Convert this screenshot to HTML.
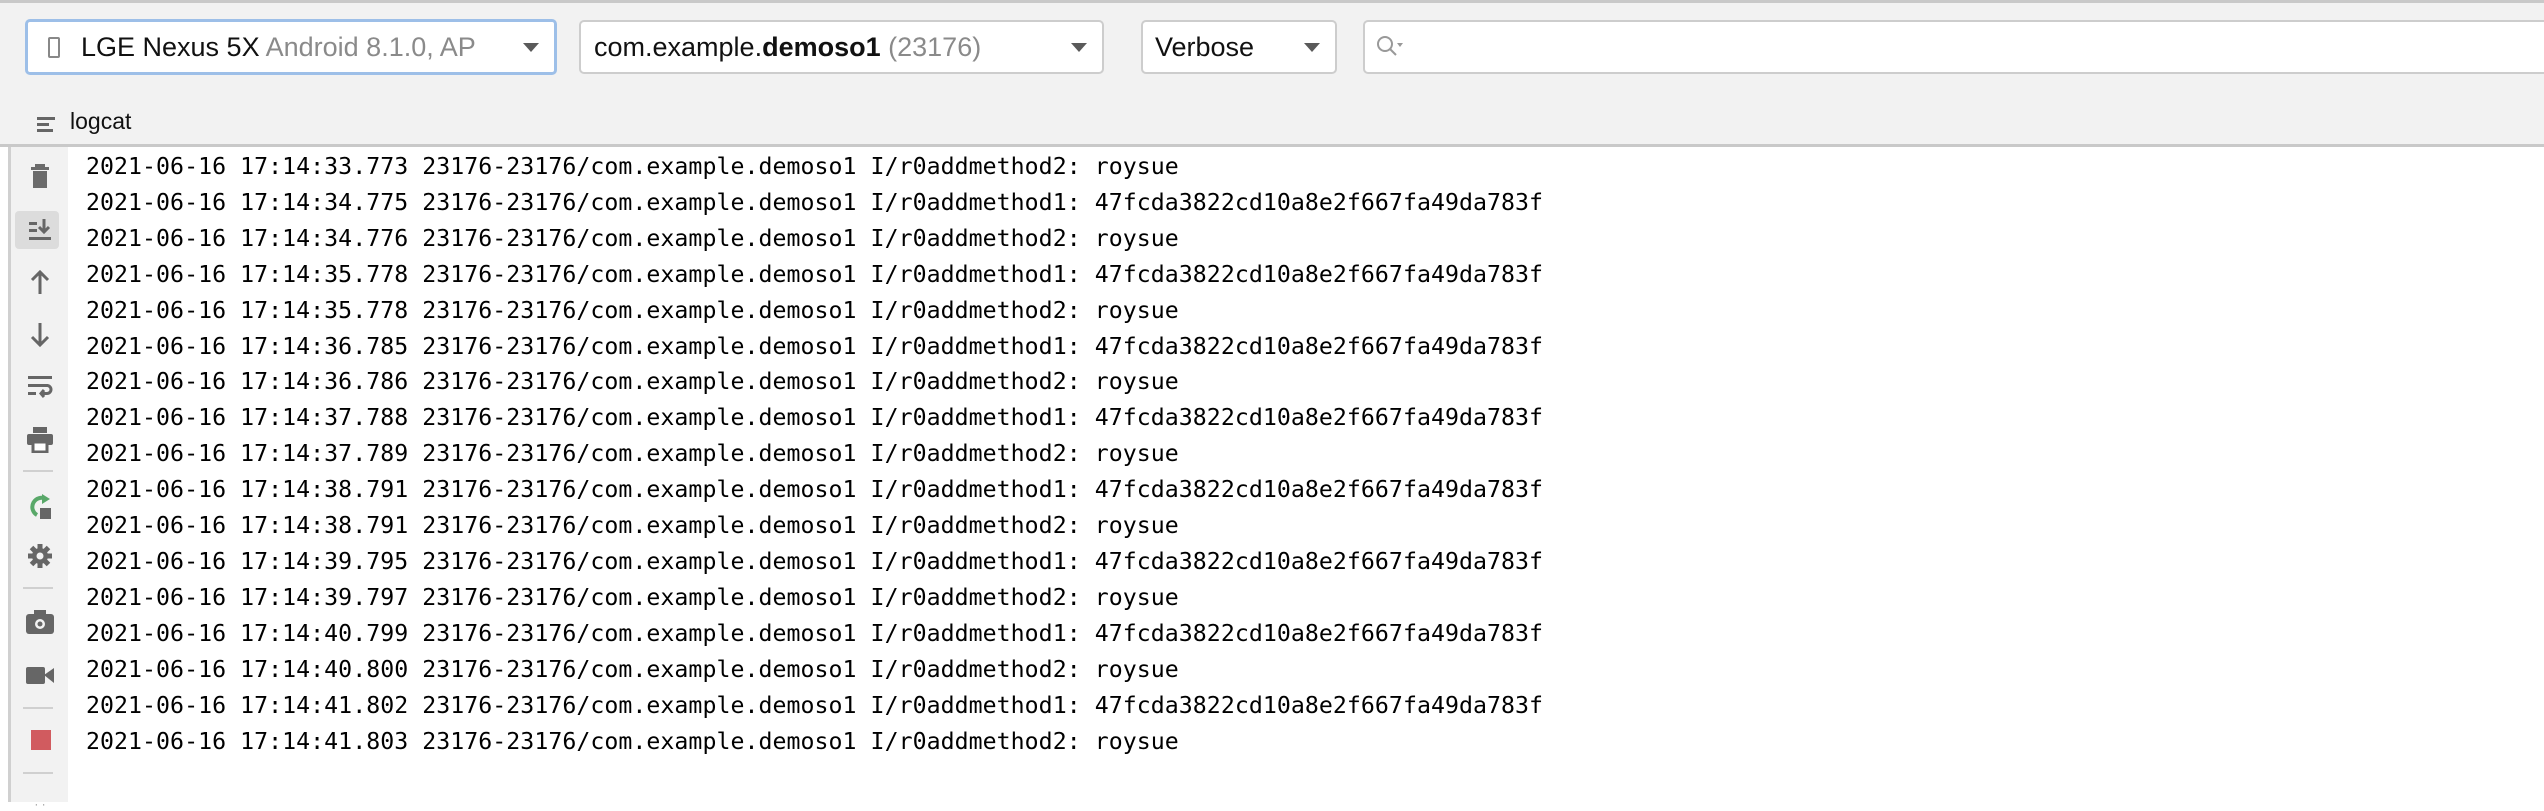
<!DOCTYPE html>
<html><head><meta charset="utf-8"><style>
*{margin:0;padding:0;box-sizing:border-box}
body{width:2544px;height:802px;overflow:hidden;background:#fff;position:relative;font-family:"Liberation Sans",sans-serif}
.tb{position:absolute;left:0;top:0;width:2544px;height:147px;background:#f2f2f2;border-top:3px solid #c9c9c9;border-bottom:3px solid #c9c9c9}
.box{position:absolute;top:20px;height:54px;background:#fff;border:2px solid #cdcdcd;border-radius:5px;font-size:27px;line-height:50px;white-space:nowrap}
.arr{position:absolute;top:21px;width:0;height:0;border-left:8px solid transparent;border-right:8px solid transparent;border-top:9px solid #5a5a5a}
.side{position:absolute;left:8px;top:147px;width:60px;height:655px;background:#f2f2f2;border-left:3px solid #d0d0d0}
.ic{position:absolute;left:0;width:58px;display:flex;justify-content:center}
.sep{position:absolute;left:12px;width:30px;height:2px;background:#d0d0d0}
.log{position:absolute;left:86px;top:147px;font-family:"DejaVu Sans Mono",monospace;font-size:23.2px;letter-spacing:0.05px;color:#000;white-space:pre;line-height:35.9px;padding-top:2px}
</style></head><body>
<div class="tb"></div>
<div class="box" style="left:25px;width:532px;border:3px solid #9dbfe8;top:19px;height:56px">
 <span style="position:absolute;left:20px;top:15px;width:12px;height:21px;border:2px solid #888;border-radius:2px"></span>
 <span style="position:absolute;left:53px;color:#111">LGE Nexus 5X <span style="color:#8a8a8a">Android 8.1.0, AP</span></span>
 <span class="arr" style="left:495px"></span>
</div>
<div class="box" style="left:579px;width:525px">
 <span style="position:absolute;left:13px;color:#111">com.example.<b>demoso1</b> <span style="color:#8a8a8a">(23176)</span></span>
 <span class="arr" style="left:490px"></span>
</div>
<div class="box" style="left:1141px;width:196px">
 <span style="position:absolute;left:12px;color:#111">Verbose</span>
 <span class="arr" style="left:161px"></span>
</div>
<div class="box" style="left:1363px;width:1200px;border-radius:5px 0 0 5px">
 <svg style="position:absolute;left:10px;top:12px" width="30" height="26" viewBox="0 0 30 26"><circle cx="10" cy="10" r="7" fill="none" stroke="#999" stroke-width="2"/><path d="M15 15l6 6" stroke="#999" stroke-width="2"/><path d="M22 9h6l-3 4z" fill="#999"/></svg>
</div>
<svg style="position:absolute;left:37px;top:115px" width="22" height="18"><rect x="0" y="2" width="18" height="3" fill="#666"/><rect x="0" y="8" width="12" height="3" fill="#666"/><rect x="0" y="14" width="16" height="3" fill="#666"/></svg>
<div style="position:absolute;left:70px;top:108px;font-size:23px;color:#111">logcat</div>
<div class="side">
 <div class="ic" style="top:17px"><svg width="22" height="26"><rect x="6" y="0" width="10" height="3" fill="#6b6b6b"/><rect x="2" y="3" width="18" height="3" fill="#6b6b6b"/><rect x="4" y="7" width="14" height="17" fill="#6b6b6b"/></svg></div>
 <div style="position:absolute;left:4px;top:64px;width:44px;height:38px;background:#dcdcdc;border-radius:4px"></div>
 <div class="ic" style="top:71px"><svg width="24" height="24"><rect x="1" y="4" width="8" height="3" fill="#666"/><rect x="1" y="11" width="8" height="3" fill="#666"/><rect x="1" y="19" width="22" height="3" fill="#666"/><path d="M16 1v12M11 9l5 5 5-5" stroke="#666" stroke-width="3" fill="none"/></svg></div>
 <div class="ic" style="top:122px"><svg width="22" height="26"><path d="M11 25V4M3 11l8-8 8 8" stroke="#666" stroke-width="3" fill="none"/></svg></div>
 <div class="ic" style="top:175px"><svg width="22" height="26"><path d="M11 1v21M3 15l8 8 8-8" stroke="#666" stroke-width="3" fill="none"/></svg></div>
 <div class="ic" style="top:227px"><svg width="26" height="24"><rect x="1" y="2" width="24" height="3" fill="#666"/><rect x="1" y="10" width="20" height="3" fill="#666"/><rect x="1" y="18" width="8" height="3" fill="#666"/><path d="M20 11.5a4 4 0 0 1 0 8h-6M17 16l-3 3.5 3 3.5" stroke="#666" stroke-width="3" fill="none"/></svg></div>
 <div class="ic" style="top:280px"><svg width="26" height="26"><rect x="6" y="0" width="14" height="6" fill="#666"/><rect x="0" y="7" width="26" height="11" rx="2" fill="#666"/><rect x="6" y="15" width="14" height="10" fill="#fff" stroke="#666" stroke-width="3"/></svg></div>
 <div class="sep" style="top:323px"></div>
 <div class="ic" style="top:346px"><svg width="28" height="28"><path d="M11 22A9 9 0 0 1 20 6" stroke="#59a869" stroke-width="4" fill="none"/><path d="M16 1l8 5-8 5z" fill="#59a869"/><rect x="14" y="15" width="11" height="11" fill="#666"/></svg></div>
 <div class="ic" style="top:396px"><svg width="26" height="26"><circle cx="13" cy="13" r="8" fill="#666"/><g stroke="#666" stroke-width="5"><path d="M13 1v24M1 13h24M4.5 4.5l17 17M21.5 4.5l-17 17"/></g><circle cx="13" cy="13" r="3.5" fill="#f2f2f2"/></svg></div>
 <div class="sep" style="top:440px"></div>
 <div class="ic" style="top:463px"><svg width="28" height="26"><rect x="8" y="0" width="12" height="5" fill="#666"/><rect x="0" y="4" width="28" height="20" rx="3" fill="#666"/><circle cx="14" cy="14" r="5" fill="#f2f2f2"/><circle cx="14" cy="14" r="2.5" fill="#666"/></svg></div>
 <div class="ic" style="top:517px"><svg width="28" height="22"><rect x="0" y="3" width="19" height="17" rx="2" fill="#666"/><path d="M18 11l10-7v15z" fill="#666"/></svg></div>
 <div class="sep" style="top:560px"></div>
 <div class="ic" style="top:583px"><div style="width:20px;height:20px;background:#d15b5f;margin-left:1px"></div></div>
 <div class="sep" style="top:625px"></div>
 <div class="ic" style="top:650px;color:#999;font-size:12px">· ·</div>
</div>
<div class="log">2021-06-16 17:14:33.773 23176-23176/com.example.demoso1 I/r0addmethod2: roysue
2021-06-16 17:14:34.775 23176-23176/com.example.demoso1 I/r0addmethod1: 47fcda3822cd10a8e2f667fa49da783f
2021-06-16 17:14:34.776 23176-23176/com.example.demoso1 I/r0addmethod2: roysue
2021-06-16 17:14:35.778 23176-23176/com.example.demoso1 I/r0addmethod1: 47fcda3822cd10a8e2f667fa49da783f
2021-06-16 17:14:35.778 23176-23176/com.example.demoso1 I/r0addmethod2: roysue
2021-06-16 17:14:36.785 23176-23176/com.example.demoso1 I/r0addmethod1: 47fcda3822cd10a8e2f667fa49da783f
2021-06-16 17:14:36.786 23176-23176/com.example.demoso1 I/r0addmethod2: roysue
2021-06-16 17:14:37.788 23176-23176/com.example.demoso1 I/r0addmethod1: 47fcda3822cd10a8e2f667fa49da783f
2021-06-16 17:14:37.789 23176-23176/com.example.demoso1 I/r0addmethod2: roysue
2021-06-16 17:14:38.791 23176-23176/com.example.demoso1 I/r0addmethod1: 47fcda3822cd10a8e2f667fa49da783f
2021-06-16 17:14:38.791 23176-23176/com.example.demoso1 I/r0addmethod2: roysue
2021-06-16 17:14:39.795 23176-23176/com.example.demoso1 I/r0addmethod1: 47fcda3822cd10a8e2f667fa49da783f
2021-06-16 17:14:39.797 23176-23176/com.example.demoso1 I/r0addmethod2: roysue
2021-06-16 17:14:40.799 23176-23176/com.example.demoso1 I/r0addmethod1: 47fcda3822cd10a8e2f667fa49da783f
2021-06-16 17:14:40.800 23176-23176/com.example.demoso1 I/r0addmethod2: roysue
2021-06-16 17:14:41.802 23176-23176/com.example.demoso1 I/r0addmethod1: 47fcda3822cd10a8e2f667fa49da783f
2021-06-16 17:14:41.803 23176-23176/com.example.demoso1 I/r0addmethod2: roysue</div>
</body></html>
